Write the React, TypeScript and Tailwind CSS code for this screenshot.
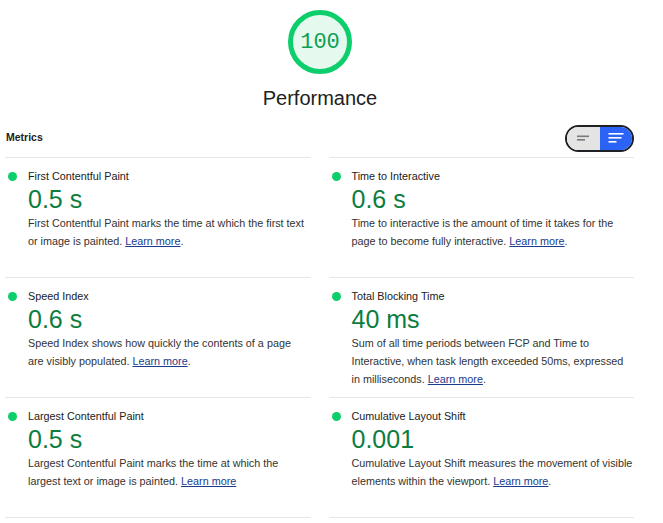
import React from 'react'

// Lighthouse-style performance summary

interface Metric {
  id: string
  title: string
  value: string
  description: string
  trailingDot?: boolean
}

const metrics: Metric[] = [
  {
    id: 'fcp',
    title: 'First Contentful Paint',
    value: '0.5 s',
    description: 'First Contentful Paint marks the time at which the first text or image is painted.',
    trailingDot: true,
  },
  {
    id: 'tti',
    title: 'Time to Interactive',
    value: '0.6 s',
    description: 'Time to interactive is the amount of time it takes for the page to become fully interactive.',
    trailingDot: true,
  },
  {
    id: 'si',
    title: 'Speed Index',
    value: '0.6 s',
    description: 'Speed Index shows how quickly the contents of a page are visibly populated.',
    trailingDot: true,
  },
  {
    id: 'tbt',
    title: 'Total Blocking Time',
    value: '40 ms',
    description:
      'Sum of all time periods between FCP and Time to Interactive, when task length exceeded 50ms, expressed in milliseconds.',
    trailingDot: true,
  },
  {
    id: 'lcp',
    title: 'Largest Contentful Paint',
    value: '0.5 s',
    description: 'Largest Contentful Paint marks the time at which the largest text or image is painted.',
    trailingDot: false,
  },
  {
    id: 'cls',
    title: 'Cumulative Layout Shift',
    value: '0.001',
    description: 'Cumulative Layout Shift measures the movement of visible elements within the viewport.',
    trailingDot: true,
  },
]

function Gauge({ score }: { score: number }) {
  return (
    <div className="relative w-[66px] h-[66px]">
      <svg width="66" height="66" viewBox="0 0 66 66">
        <circle cx="33" cy="33" r="29.5" fill="#e6f9ef" stroke="#0cce6b" strokeWidth="5" />
      </svg>
      <span
        className="absolute inset-0 flex items-center justify-center text-[22px] text-[#0b9f52]"
        style={{ fontFamily: '"Liberation Mono", monospace' }}
      >
        {score}
      </span>
    </div>
  )
}

function ViewToggle() {
  return (
    <div className="flex h-[27px] w-[69px] rounded-full border-2 border-[#202124] overflow-hidden">
      <div className="flex-1 bg-[#e4e4e4] flex items-center justify-center">
        <svg width="14" height="8" viewBox="0 0 14 8">
          <rect x="1" y="1.5" width="12" height="1.6" fill="#7a7a7a" />
          <rect x="1" y="5" width="8" height="1.6" fill="#7a7a7a" />
        </svg>
      </div>
      <div className="flex-1 bg-[#2a63f5] flex items-center justify-center">
        <svg width="16" height="12" viewBox="0 0 16 12">
          <rect x="0.5" y="1" width="15" height="1.6" fill="#fff" />
          <rect x="0.5" y="5" width="13" height="1.6" fill="#fff" />
          <rect x="0.5" y="9" width="8" height="1.6" fill="#fff" />
        </svg>
      </div>
    </div>
  )
}

function MetricItem({ metric, left }: { metric: Metric; left: boolean }) {
  return (
    <div className="border-t border-[#e6e6e6] h-[120px] pt-[9px] pl-[23px] relative">
      <span className="absolute left-[3px] top-[14px] w-[9px] h-[9px] rounded-full bg-[#0cce6b]" />
      <div className="text-[10.8px] leading-[18px] text-[#212121]">{metric.title}</div>
      <div className="text-[25px] leading-[29px] h-[29px] text-[#0c7d40]">{metric.value}</div>
      <p className={left ? 'text-[10.8px] leading-[18px] text-[#333] pr-[3px]' : 'text-[10.8px] leading-[18px] text-[#333]'}>
        {metric.description}{' '}
        <a href="#" className="text-[#1b3b8c] underline">
          Learn more
        </a>
        {metric.trailingDot ? '.' : ''}
      </p>
    </div>
  )
}

export default function App() {
  return (
    <div
      className="w-[663px] h-[523px] bg-white overflow-hidden"
      style={{ fontFamily: '"Liberation Sans", Arial, sans-serif' }}
    >
      <div className="w-[640px] flex flex-col items-center pt-[9px]">
        <Gauge score={100} />
        <div className="mt-[11px] text-[20px] leading-[24px] text-[#212121]">Performance</div>
      </div>

      <div className="ml-[5px] w-[629px]">
        <div className="flex items-center justify-between h-[30px] mt-[13px] mb-[4px]">
          <span className="pl-[1px] text-[10.5px] font-bold text-[#212121]">Metrics</span>
          <ViewToggle />
        </div>
        <div className="grid grid-cols-2 gap-x-[18px]">
          {metrics.map((m, i) => (
            <MetricItem key={m.id} metric={m} left={i % 2 === 0} />
          ))}
          <div className="border-t border-[#e6e6e6]" />
          <div className="border-t border-[#e6e6e6]" />
        </div>
      </div>
    </div>
  )
}
